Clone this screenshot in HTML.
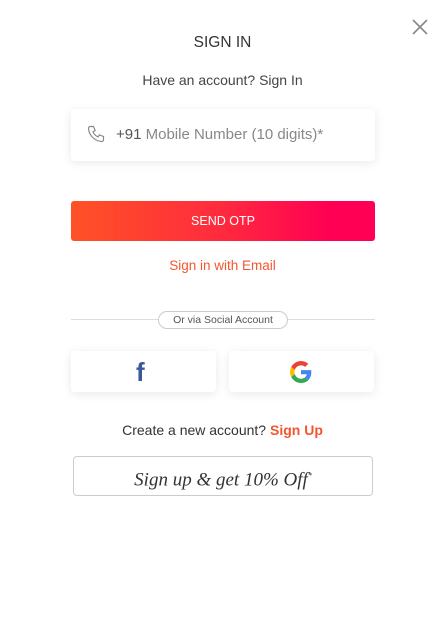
<!DOCTYPE html>
<html><head><style>
body{margin:0;width:441px;height:619px;background:#fff;font-family:"Liberation Sans",sans-serif;position:relative;overflow:hidden}
.a{position:absolute}
.card{background:#fff;border-radius:4px;box-shadow:0 2px 10px rgba(0,0,0,0.09)}
</style></head><body>
<div class="a" style="left:411px;top:18px;width:18px;height:18px">
<svg width="18" height="18"><path d="M2 2L16 16M16 2L2 16" stroke="#888" stroke-width="1.6"/></svg></div>
<div class="a" style="left:0;width:445px;top:34px;text-align:center;font-size:15.5px;color:#333">SIGN IN</div>
<div class="a" style="left:0;width:445px;top:72px;text-align:center;font-size:14px;color:#444">Have an account? Sign In</div>
<div class="a card" style="left:71px;top:109px;width:304px;height:52px"></div>
<svg class="a" style="left:86px;top:124px" width="20" height="20" viewBox="0 0 24 24"><path d="M5 3l4 0 2 5-2.5 1.5a11 11 0 0 0 6 6L16 13l5 2v4a2 2 0 0 1-2 2A17 17 0 0 1 3 5a2 2 0 0 1 2-2z" fill="none" stroke="#888" stroke-width="1.4"/></svg>
<div class="a" style="left:116px;top:126px;font-size:15px;color:#555">+91 <span style="color:#888">Mobile Number (10 digits)*</span></div>
<div class="a" style="left:71px;top:201px;width:304px;height:40px;border-radius:3px;background:linear-gradient(90deg,#ff5226,#ff2a3e 50%,#ff0054 85%);color:#fff;font-size:12.5px;text-align:center;line-height:40px">SEND OTP</div>
<div class="a" style="left:0;width:445px;top:258px;text-align:center;font-size:13.5px;color:#f4552f">Sign in with Email</div>
<div class="a" style="left:71px;top:319px;width:304px;height:1px;background:#ddd"></div>
<div class="a" style="left:158px;top:311px;width:128px;height:16px;border:1px solid #ccc;border-radius:9px;background:#fff;font-size:10.5px;color:#555;text-align:center;line-height:16px">Or via Social Account</div>
<div class="a card" style="left:71px;top:351px;width:145px;height:41px"></div>
<div class="a" style="left:136px;top:358px;font-size:26px;font-weight:bold;color:#3b5998;line-height:28px">f</div>
<div class="a card" style="left:229px;top:351px;width:145px;height:41px"></div>
<svg class="a" style="left:290px;top:361px" width="22" height="22" viewBox="0 0 48 48"><path fill="#EA4335" d="M24 9.5c3.5 0 6.6 1.2 9 3.5l6.7-6.7C35.6 2.4 30.2 0 24 0 14.6 0 6.6 5.4 2.7 13.3l7.8 6C12.4 13.7 17.7 9.5 24 9.5z"/><path fill="#4285F4" d="M46.5 24.5c0-1.6-.1-3.1-.4-4.5H24v9h12.7c-.6 2.9-2.2 5.4-4.7 7.1l7.6 5.9c4.4-4.1 6.9-10.1 6.9-17.5z"/><path fill="#FBBC05" d="M10.5 28.7c-.5-1.4-.8-3-.8-4.7s.3-3.2.8-4.7l-7.8-6C1 16.6 0 20.2 0 24s1 7.4 2.7 10.7l7.8-6z"/><path fill="#34A853" d="M24 48c6.5 0 11.9-2.1 15.9-5.8L32.3 36.3c-2.1 1.4-4.9 2.3-8.3 2.3-6.3 0-11.6-4.2-13.5-10l-7.8 6C6.6 42.6 14.6 48 24 48z"/></svg>
<div class="a" style="left:0;width:445px;top:422px;text-align:center;font-size:14px;color:#333">Create a new account? <b style="color:#f4552f">Sign Up</b></div>
<div class="a" style="left:73px;top:456px;width:298px;height:38px;border:1px solid #ccc;border-radius:4px;text-align:center;line-height:38px;font-family:'Liberation Serif',serif;font-style:italic;font-size:19px;color:#333">Sign up &amp; get 10% Off<sup style="font-size:8px">*</sup></div>
</body></html>
